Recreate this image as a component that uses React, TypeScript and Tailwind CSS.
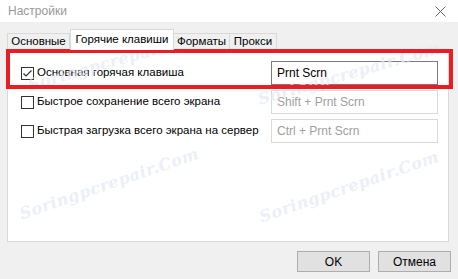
import React from "react";

const font = { fontFamily: '"Liberation Sans", Arial, sans-serif' };

function Checkbox({ checked }: { checked?: boolean }) {
  return (
    <div className="w-[13px] h-[13px] border border-[#333333] bg-white flex items-center justify-center shrink-0">
      {checked && (
        <svg width="11" height="11" viewBox="0 0 11 11">
          <path d="M1.5 5.5 L4 8 L9.5 2.5" fill="none" stroke="#333" strokeWidth="1.2" />
        </svg>
      )}
    </div>
  );
}

function Row({ label, value, checked, focused }: { label: string; value: string; checked?: boolean; focused?: boolean }) {
  return (
    <div className="flex items-center h-[24px]">
      <div className="flex items-center gap-[3px] w-[250px]">
        <Checkbox checked={checked} />
        <span className="text-[11.5px] text-black leading-none whitespace-nowrap">{label}</span>
      </div>
      <div
        className={
          "w-[167px] h-[24px] flex items-center px-[5px] bg-white text-[12px] leading-none " +
          (focused ? "border border-[#7a7a7a] text-black" : "border border-[#d9d9d9] text-[#a0a0a0]")
        }
      >
        {value}
      </div>
    </div>
  );
}

function Watermark({ x, y, rot }: { x: number; y: number; rot: number }) {
  return (
    <div
      className="absolute pointer-events-none text-[16px] italic font-bold text-[#e4e9f6] opacity-70 whitespace-nowrap"
      style={{ left: x, top: y, transform: `rotate(${rot}deg)`, fontFamily: '"DejaVu Serif", serif', letterSpacing: "0.5px" }}
    >
      Soringpcrepair.Com
    </div>
  );
}

export default function App() {
  return (
    <div className="relative w-[458px] h-[279px] bg-[#f0f0f0] overflow-hidden" style={font}>
      <div className="h-[22px] bg-white flex items-center justify-between pl-[8px] pr-[12px]">
        <span className="text-[12px] text-[#999999] leading-none">Настройки</span>
        <svg width="11" height="11" viewBox="0 0 11 11">
          <path d="M0.5 0.5 L10.5 10.5 M10.5 0.5 L0.5 10.5" stroke="#666" strokeWidth="1" />
        </svg>
      </div>
      <div className="pl-[7px] pr-[9px] pt-[7px]">
        <div className="flex items-end h-[20px] relative z-10">
          <div className="h-[16px] w-[63px] border border-b-0 border-[#d9d9d9] bg-[#f0f0f0] flex items-center justify-center text-[11.5px] leading-none">Основные</div>
          <div className="h-[21px] w-[104px] border border-b-0 border-[#d9d9d9] bg-white flex items-center justify-center text-[11.5px] leading-none -mb-px">Горячие клавиши</div>
          <div className="h-[16px] w-[56px] border border-b-0 border-l-0 border-[#d9d9d9] bg-[#f0f0f0] flex items-center justify-center text-[11.5px] leading-none">Форматы</div>
          <div className="h-[16px] w-[47px] border border-b-0 border-l-0 border-[#d9d9d9] bg-[#f0f0f0] flex items-center justify-center text-[11.5px] leading-none">Прокси</div>
        </div>
        <div className="h-[193px] bg-white border border-[#d9d9d9] pl-[13px] pt-[11px] flex flex-col gap-[5px]">
          <Row label="Основная горячая клавиша" value="Prnt Scrn" checked focused />
          <Row label="Быстрое сохранение всего экрана" value="Shift + Prnt Scrn" />
          <Row label="Быстрая загрузка всего экрана на сервер" value="Ctrl + Prnt Scrn" />
        </div>
        <div className="flex justify-end gap-[8px] pt-[9px] mr-[-2px]">
          <button className="w-[73px] h-[21px] bg-[#e1e1e1] border border-[#adadad] text-[12px] leading-none">OK</button>
          <button className="w-[73px] h-[21px] bg-[#e1e1e1] border border-[#adadad] text-[12px] leading-none">Отмена</button>
        </div>
      </div>
      <Watermark x={25} y={48} rot={-16} />
      <Watermark x={255} y={62} rot={-16} />
      <Watermark x={15} y={172} rot={-19} />
      <Watermark x={255} y={175} rot={-19} />
      <div className="absolute left-[6px] top-[49px] w-[447px] h-[40px] border-4 border-[#ec1c24] pointer-events-none" />
    </div>
  );
}
